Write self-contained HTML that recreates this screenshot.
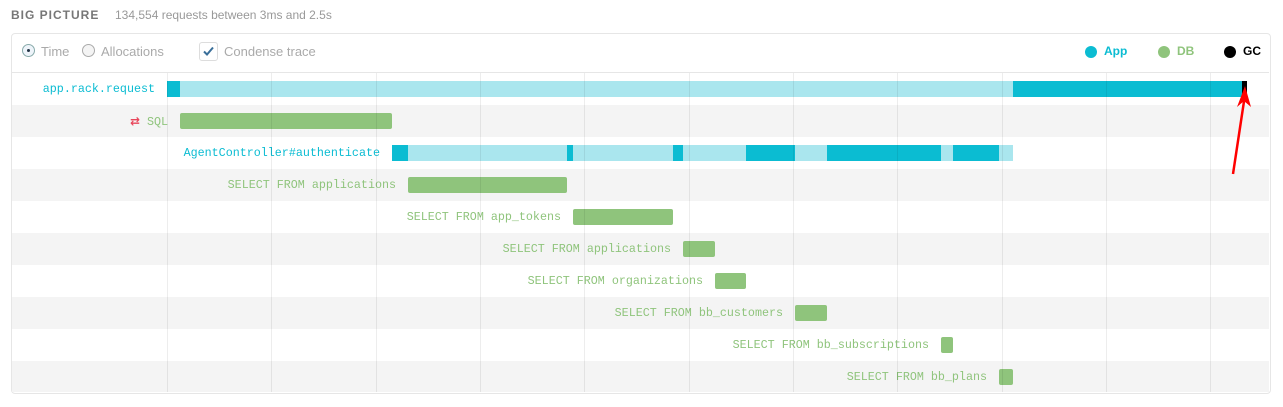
<!DOCTYPE html>
<html><head><style>
body{margin:0;width:1283px;height:407px;background:#fff;font-family:"Liberation Sans",sans-serif;position:relative;overflow:hidden}
.a{position:absolute}
.lbl{position:absolute;font-family:"Liberation Mono",monospace;font-size:11.7px;white-space:nowrap;text-align:right;line-height:32px}
.b{position:absolute;height:16px}
.g{background:#8fc47c;border-radius:2px}
.d{background:#0bbcd2}
.l{background:#aae6ee}
</style></head><body>
<div class="a" style="left:11px;top:8px;font-size:12px;font-weight:bold;letter-spacing:1px;color:#777">BIG PICTURE</div>
<div class="a" style="left:115px;top:8px;font-size:12px;color:#999">134,554 requests between 3ms and 2.5s</div>
<div class="a" style="left:11px;top:33px;width:1258px;height:359px;border:1px solid #e6e6e6;border-radius:4px"></div>
<div class="a" style="left:12px;top:72px;width:1257px;height:1px;background:#e6e6e6"></div>
<!-- controls -->
<div class="a" style="left:22px;top:44px;width:13px;height:13px;border:1px solid #8aa;border-radius:50%;box-sizing:border-box;background:#eef4fa"><div class="a" style="left:4px;top:4px;width:3px;height:3px;border-radius:50%;background:#234"></div></div>
<div class="a" style="left:41px;top:44px;font-size:13px;color:#aaa">Time</div>
<div class="a" style="left:82px;top:44px;width:13px;height:13px;border:1px solid #aaa;border-radius:50%;box-sizing:border-box;background:#f4f4f4"></div>
<div class="a" style="left:101px;top:44px;font-size:13px;color:#aaa">Allocations</div>
<div class="a" style="left:199px;top:42px;width:19px;height:19px;border:1px solid #ddd;border-radius:3px;box-sizing:border-box"></div>
<svg class="a" style="left:202px;top:45px" width="13" height="12"><path d="M2 6.5 L5 9.5 L11 2.5" stroke="#3a6f9a" stroke-width="2" fill="none"/></svg>
<div class="a" style="left:224px;top:44px;font-size:13px;color:#aaa">Condense trace</div>
<div class="a" style="left:1085px;top:46px;width:12px;height:12px;border-radius:50%;background:#0bbcd2"></div>
<div class="a" style="left:1104px;top:44px;font-size:12px;font-weight:bold;color:#0bbcd2">App</div>
<div class="a" style="left:1158px;top:46px;width:12px;height:12px;border-radius:50%;background:#8fc47c"></div>
<div class="a" style="left:1177px;top:44px;font-size:12px;font-weight:bold;color:#8fc47c">DB</div>
<div class="a" style="left:1224px;top:46px;width:12px;height:12px;border-radius:50%;background:#000"></div>
<div class="a" style="left:1243px;top:44px;font-size:12px;font-weight:bold;color:#000">GC</div>
<!-- zebra -->
<div class="a" style="left:12px;top:105px;width:1257px;height:32px;background:#f4f4f4"></div>
<div class="a" style="left:12px;top:169px;width:1257px;height:32px;background:#f4f4f4"></div>
<div class="a" style="left:12px;top:233px;width:1257px;height:32px;background:#f4f4f4"></div>
<div class="a" style="left:12px;top:297px;width:1257px;height:32px;background:#f4f4f4"></div>
<div class="a" style="left:12px;top:361px;width:1257px;height:31px;background:#f4f4f4"></div>
<!-- labels -->
<div class="lbl" style="right:1128px;top:73px;color:#0bbcd2">app.rack.request</div>
<div class="lbl" style="right:1115px;top:105px;color:#8fc47c"><span style="color:#e8455a;font-family:'DejaVu Sans';font-weight:bold">⇄</span> SQL</div>
<div class="lbl" style="right:903px;top:137px;color:#0bbcd2">AgentController#authenticate</div>
<div class="lbl" style="right:887px;top:169px;color:#8fc47c">SELECT FROM applications</div>
<div class="lbl" style="right:722px;top:201px;color:#8fc47c">SELECT FROM app_tokens</div>
<div class="lbl" style="right:612px;top:233px;color:#8fc47c">SELECT FROM applications</div>
<div class="lbl" style="right:580px;top:265px;color:#8fc47c">SELECT FROM organizations</div>
<div class="lbl" style="right:500px;top:297px;color:#8fc47c">SELECT FROM bb_customers</div>
<div class="lbl" style="right:354px;top:329px;color:#8fc47c">SELECT FROM bb_subscriptions</div>
<div class="lbl" style="right:296px;top:361px;color:#8fc47c">SELECT FROM bb_plans</div>
<!-- bars -->
<div class="b d" style="left:167px;top:81px;width:13px"></div>
<div class="b l" style="left:180px;top:81px;width:833px"></div>
<div class="b d" style="left:1013px;top:81px;width:229px"></div>
<div class="b" style="left:1242px;top:81px;width:5px;background:#000"></div>
<div class="b g" style="left:180px;top:113px;width:212px"></div>
<div class="b d" style="left:392px;top:145px;width:16px"></div>
<div class="b l" style="left:408px;top:145px;width:159px"></div>
<div class="b d" style="left:567px;top:145px;width:6px"></div>
<div class="b l" style="left:573px;top:145px;width:100px"></div>
<div class="b d" style="left:673px;top:145px;width:10px"></div>
<div class="b l" style="left:683px;top:145px;width:63px"></div>
<div class="b d" style="left:746px;top:145px;width:49px"></div>
<div class="b l" style="left:795px;top:145px;width:32px"></div>
<div class="b d" style="left:827px;top:145px;width:114px"></div>
<div class="b l" style="left:941px;top:145px;width:12px"></div>
<div class="b d" style="left:953px;top:145px;width:46px"></div>
<div class="b l" style="left:999px;top:145px;width:14px"></div>
<div class="b g" style="left:408px;top:177px;width:159px"></div>
<div class="b g" style="left:573px;top:209px;width:100px"></div>
<div class="b g" style="left:683px;top:241px;width:32px"></div>
<div class="b g" style="left:715px;top:273px;width:31px"></div>
<div class="b g" style="left:795px;top:305px;width:32px"></div>
<div class="b g" style="left:941px;top:337px;width:12px"></div>
<div class="b g" style="left:999px;top:369px;width:14px"></div>
<!-- grid -->
<div class="a" style="left:167px;top:73px;width:1px;height:319px;background:rgba(0,0,0,.07)"></div>
<div class="a" style="left:271px;top:73px;width:1px;height:319px;background:rgba(0,0,0,.07)"></div>
<div class="a" style="left:376px;top:73px;width:1px;height:319px;background:rgba(0,0,0,.07)"></div>
<div class="a" style="left:480px;top:73px;width:1px;height:319px;background:rgba(0,0,0,.07)"></div>
<div class="a" style="left:584px;top:73px;width:1px;height:319px;background:rgba(0,0,0,.07)"></div>
<div class="a" style="left:689px;top:73px;width:1px;height:319px;background:rgba(0,0,0,.07)"></div>
<div class="a" style="left:793px;top:73px;width:1px;height:319px;background:rgba(0,0,0,.07)"></div>
<div class="a" style="left:897px;top:73px;width:1px;height:319px;background:rgba(0,0,0,.07)"></div>
<div class="a" style="left:1002px;top:73px;width:1px;height:319px;background:rgba(0,0,0,.07)"></div>
<div class="a" style="left:1106px;top:73px;width:1px;height:319px;background:rgba(0,0,0,.07)"></div>
<div class="a" style="left:1210px;top:73px;width:1px;height:319px;background:rgba(0,0,0,.07)"></div>
<!-- arrow -->
<svg class="a" style="left:1220px;top:80px" width="40" height="100"><path d="M13 94 L24.5 18" stroke="#f00" stroke-width="2.5" fill="none"/><path d="M25 6 L17 27 L24 21 L31 27 Z" fill="#f00"/></svg>
</body></html>
